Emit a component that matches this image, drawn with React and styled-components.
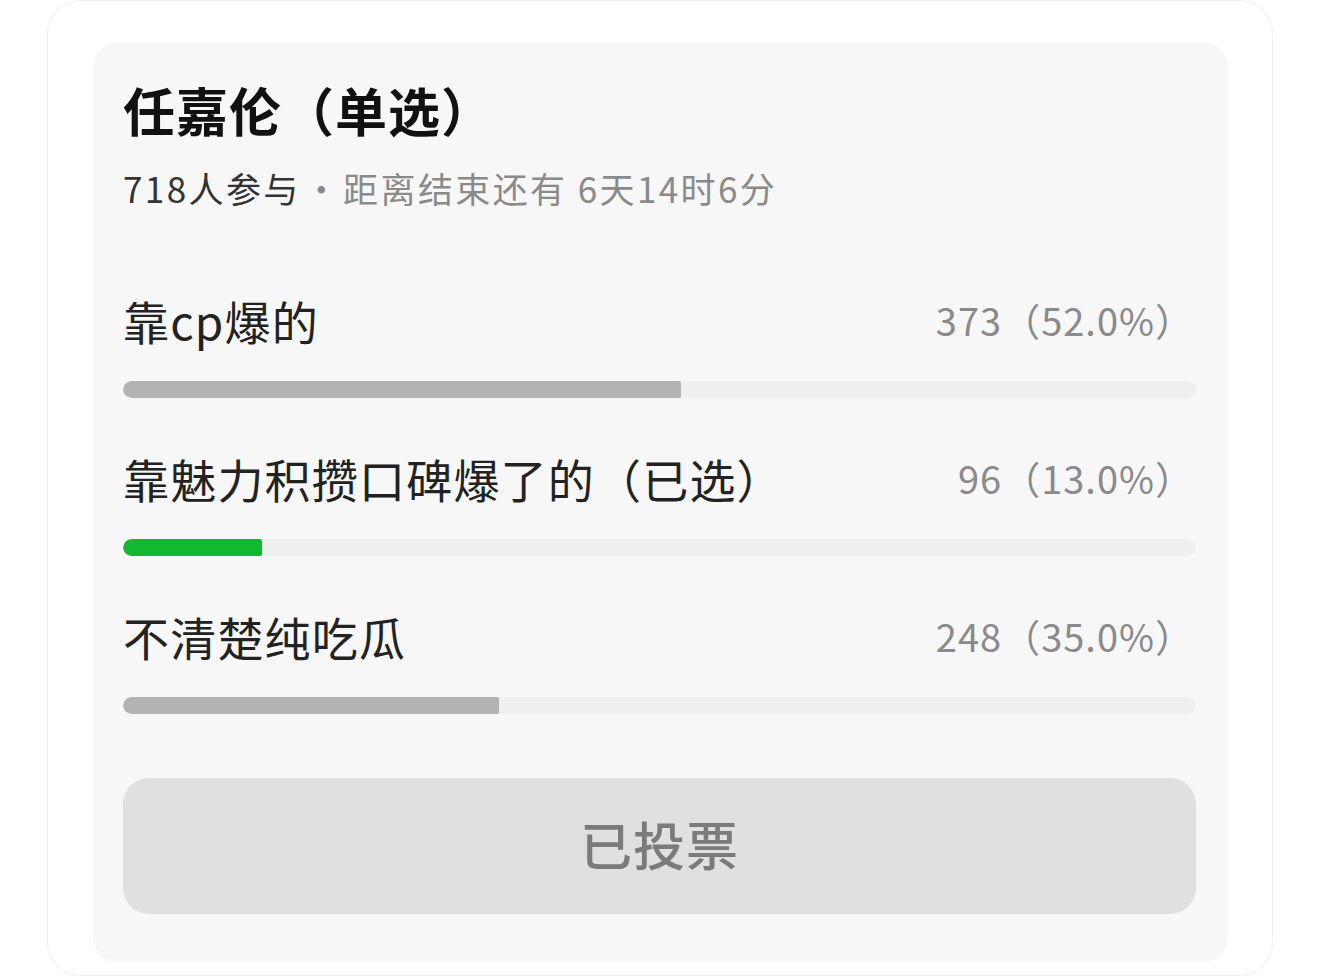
import React from 'react';
import styled, { createGlobalStyle } from 'styled-components';

const GlobalStyle = createGlobalStyle`
	html, body {
		margin: 0;
		padding: 0;
		background: #ffffff;
	}
	body {
		font-family: "Noto Sans CJK SC", "Noto Sans", sans-serif;
		-webkit-font-smoothing: antialiased;
	}
`;

const Page = styled.div`
	width: 1320px;
	height: 977px;
	overflow: hidden;
	box-sizing: border-box;
	padding-left: 47px;
`;

const OuterCard = styled.div`
	width: 1226px;
	height: 976px;
	box-sizing: border-box;
	border: 1.5px solid #f1f1f1;
	border-radius: 34px;
	padding: 42px 44px 0 45px;
	background: #ffffff;
`;

const PollCard = styled.div`
	background: #f7f7f7;
	border-radius: 24px;
	padding: 32px 32px 48px 30px;
	display: flex;
	flex-direction: column;
`;

const Title = styled.h1`
	margin: 0;
	font-size: 52px;
	line-height: 70px;
	font-weight: 700;
	color: #111111;
	letter-spacing: 1px;
`;

const Meta = styled.div`
	margin-top: 21px;
	font-size: 35px;
	line-height: 44px;
	color: #8a8a8a;
	letter-spacing: 2.4px;
`;

const Joined = styled.span`
	color: #333333;
`;

const Dot = styled.span`
	margin: 0 2px 0 3px;
`;

const Options = styled.div`
	margin-top: 80px;
	display: flex;
	flex-direction: column;
	gap: 50px;
`;

const Option = styled.div`
	display: flex;
	flex-direction: column;
	gap: 31px;
`;

const OptionHead = styled.div`
	display: flex;
	align-items: center;
	justify-content: space-between;
	height: 60px;
	padding-right: 2px;
`;

const Label = styled.div`
	font-size: 46px;
	line-height: 60px;
	color: #222222;
	letter-spacing: 1.2px;
`;

const Count = styled.div`
	font-size: 38px;
	line-height: 60px;
	color: #8a8a8a;
	letter-spacing: 1px;
`;

const Track = styled.div`
	height: 17px;
	border-radius: 9px;
	background: #efefef;
	overflow: hidden;
`;

const Fill = styled.div`
	height: 100%;
	border-radius: 9px 2px 2px 9px;
	background: ${(p) => (p.$chosen ? '#12b82f' : '#b3b3b3')};
`;

const VotedButton = styled.div`
	margin-top: 64px;
	height: 136px;
	box-sizing: border-box;
	padding-bottom: 6px;
	border-radius: 26px;
	background: #e0e0e0;
	display: flex;
	align-items: center;
	justify-content: center;
	font-size: 52px;
	font-weight: 500;
	color: #7b7b7b;
	letter-spacing: 1px;
`;

const options = [
	{ label: '靠cp爆的', count: 373, pct: 52.0 },
	{ label: '靠魅力积攒口碑爆了的（已选）', count: 96, pct: 13.0, chosen: true },
	{ label: '不清楚纯吃瓜', count: 248, pct: 35.0 },
];

export default function App() {
	return (
		<Page>
			<GlobalStyle />
			<OuterCard>
				<PollCard>
					<Title>任嘉伦（单选）</Title>
					<Meta>
						<Joined>718人参与</Joined>
						<Dot>·</Dot>距离结束还有 6天14时6分
					</Meta>
					<Options>
						{options.map((o) => (
							<Option key={o.label}>
								<OptionHead>
									<Label>{o.label}</Label>
									<Count>
										{o.count}（{o.pct.toFixed(1)}%）
									</Count>
								</OptionHead>
								<Track>
									<Fill $chosen={o.chosen} style={{ width: `${o.pct}%` }} />
								</Track>
							</Option>
						))}
					</Options>
					<VotedButton>已投票</VotedButton>
				</PollCard>
			</OuterCard>
		</Page>
	);
}
